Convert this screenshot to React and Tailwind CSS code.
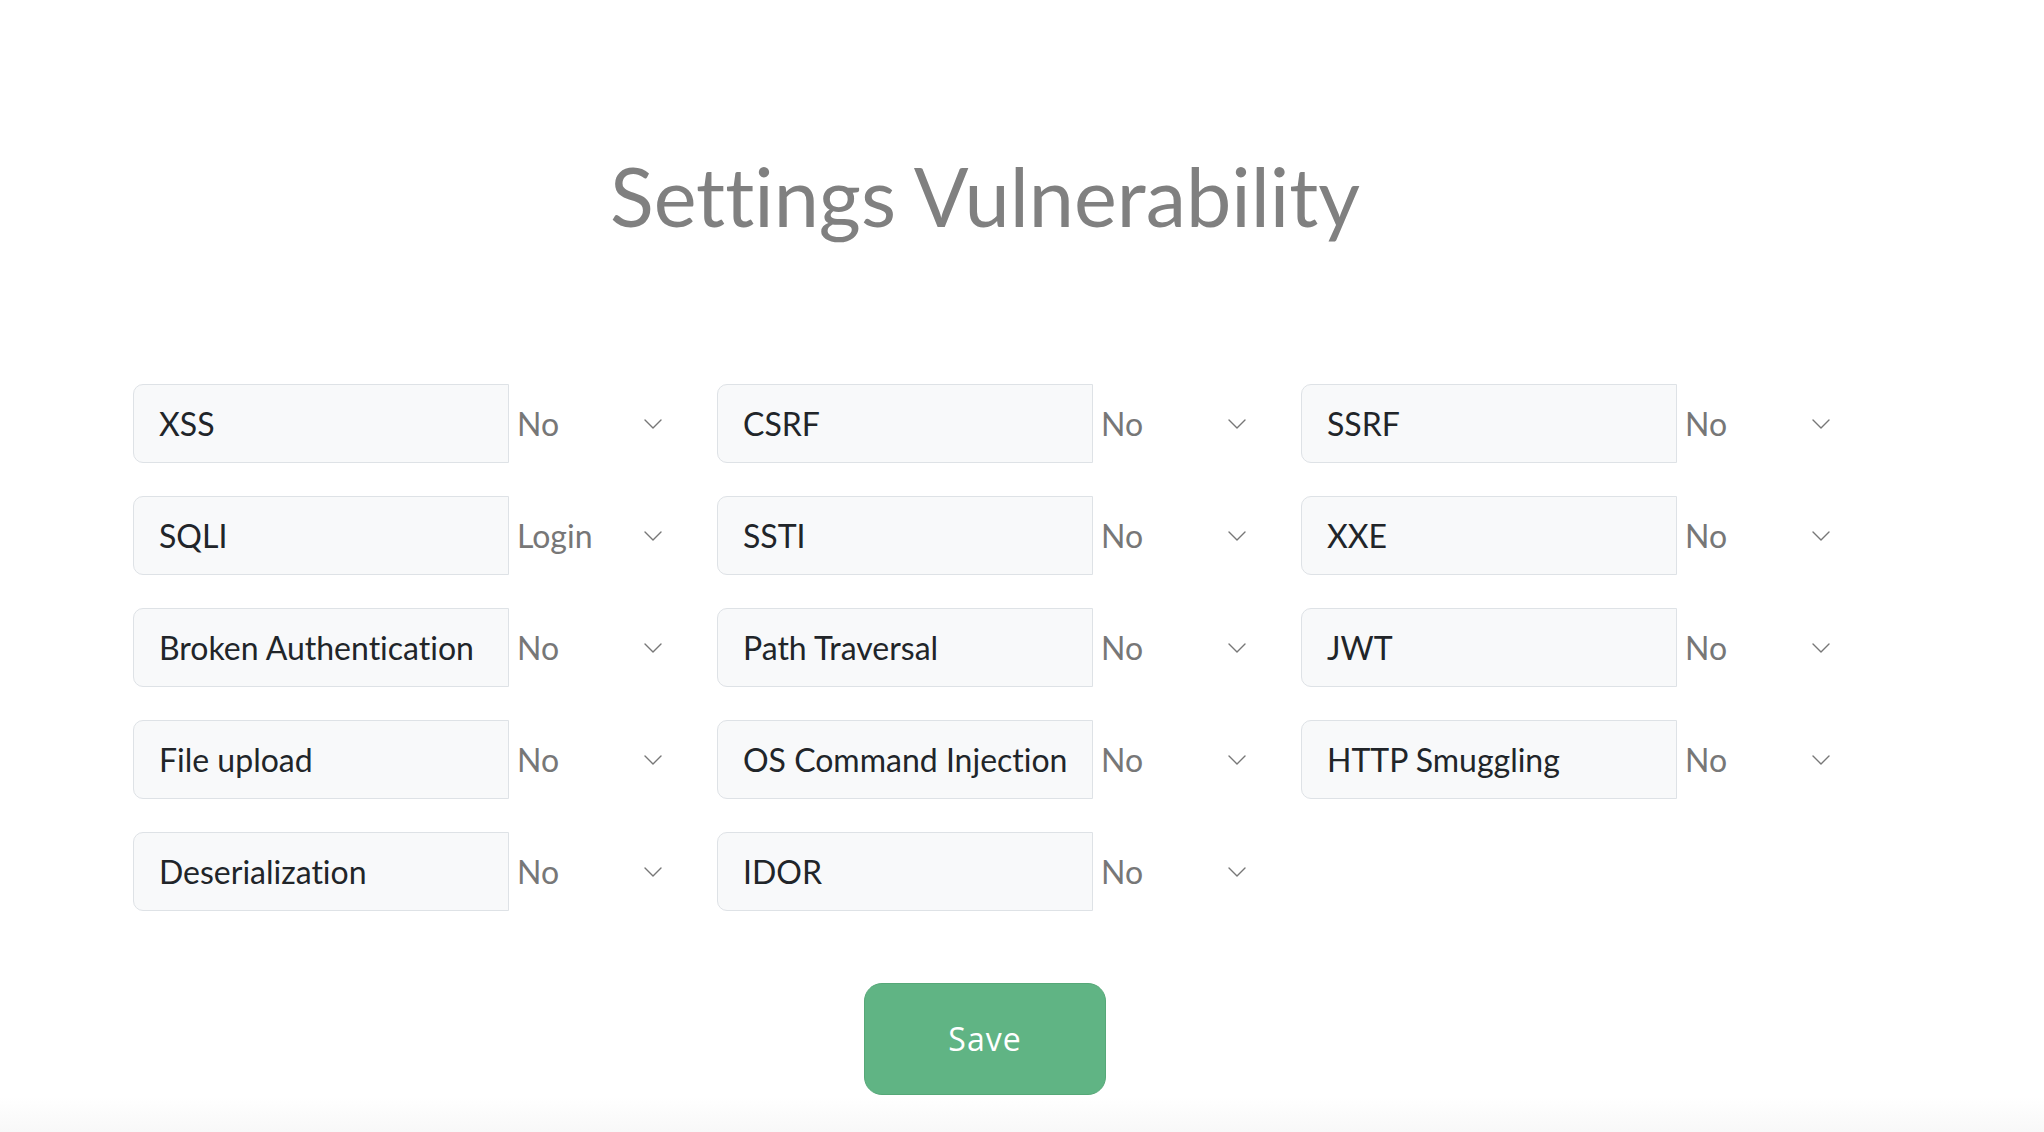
import React, { useState } from 'react';

const vulns = [
  { name: 'XSS', value: 'No' },
  { name: 'CSRF', value: 'No' },
  { name: 'SSRF', value: 'No' },
  { name: 'SQLI', value: 'Login' },
  { name: 'SSTI', value: 'No' },
  { name: 'XXE', value: 'No' },
  { name: 'Broken Authentication', value: 'No' },
  { name: 'Path Traversal', value: 'No' },
  { name: 'JWT', value: 'No' },
  { name: 'File upload', value: 'No' },
  { name: 'OS Command Injection', value: 'No' },
  { name: 'HTTP Smuggling', value: 'No' },
  { name: 'Deserialization', value: 'No' },
  { name: 'IDOR', value: 'No' },
];

const Chevron = () => (
  <svg width="18" height="10" viewBox="0 0 18 10" fill="none" stroke="#777777" strokeWidth="1.4" strokeLinecap="round" strokeLinejoin="round">
    <polyline points="1,1 9,9 17,1" />
  </svg>
);

const VulnRow = ({ name, value, onChange }) => (
  <div className="flex h-[79px]">
    <div className="w-[376px] h-full flex items-center pl-[25px] bg-[#f8f9fa] border border-[#dee2e6] rounded-l-[10px] text-[32px] text-[#212529]">
      {name}
    </div>
    <div className="relative w-[160px] h-full">
      <select
        value={value}
        onChange={(e) => onChange(e.target.value)}
        className="appearance-none w-full h-full bg-transparent pl-[8px] pr-[30px] text-[32px] text-[#777777] outline-none border-0 cursor-pointer"
      >
        <option value="No">No</option>
        <option value="Login">Login</option>
        <option value="Yes">Yes</option>
      </select>
      <div className="absolute right-[7px] top-[35px] pointer-events-none">
        <Chevron />
      </div>
    </div>
  </div>
);

const App = () => {
  const [settings, setSettings] = useState(vulns);

  const updateValue = (index, value) => {
    setSettings(settings.map((item, i) => (i === index ? { ...item, value } : item)));
  };

  return (
    <div className="min-h-[1132px] bg-white font-['Lato',sans-serif] [font-variant-ligatures:none] flex flex-col">
      <div className="w-[1970px] flex flex-col items-center pt-[148px]">
        <h1 className="text-[81px] leading-[96px] text-[#808080] font-normal">Settings Vulnerability</h1>

        <div className="mt-[140px] grid grid-cols-[536px_536px_536px] gap-x-[48px] gap-y-[33px]">
          {settings.map((item, index) => (
            <VulnRow key={item.name} name={item.name} value={item.value} onChange={(v) => updateValue(index, v)} />
          ))}
        </div>

        <button className="mt-[72px] w-[242px] h-[112px] rounded-[18px] bg-[#60b484] border border-[#56a878] text-white text-[32px] tracking-[1px] font-['Open_Sans',sans-serif]">
          Save
        </button>
      </div>
      <div className="flex-1 mt-[2px] bg-gradient-to-b from-white to-[#f8f8f8]" />
    </div>
  );
};

export default App;
